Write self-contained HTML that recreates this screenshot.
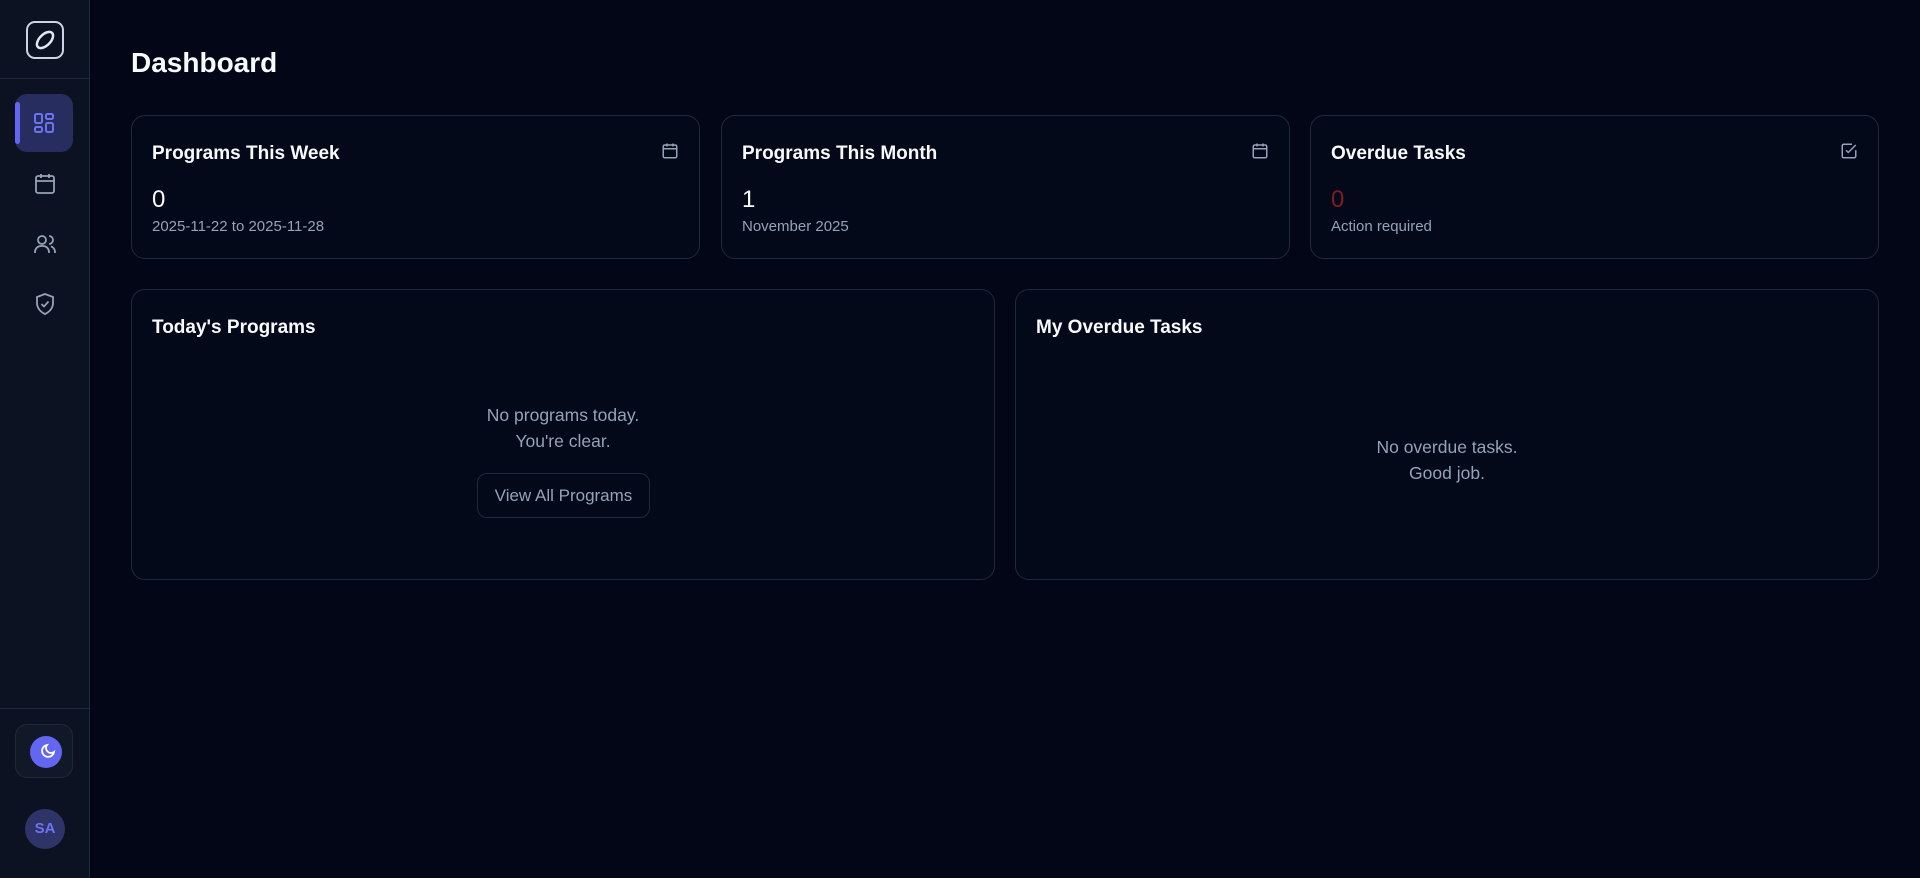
<!DOCTYPE html>
<html><head><meta charset="utf-8"><style>
*{box-sizing:border-box;margin:0;padding:0}
body{width:1920px;height:878px;background:#020617;font-family:"Liberation Sans",sans-serif;color:#f1f5f9;position:relative;overflow:hidden}
.sb{position:absolute;left:0;top:0;width:90px;height:878px;background:#0c1222;border-right:1px solid #1e293b}
.hl{position:absolute;left:0;width:89px;height:1px;background:#1e293b}
.logo{position:absolute;left:26px;top:21px;width:38px;height:38px;border:2px solid #cbd5e1;border-radius:9px}
.act{position:absolute;left:15px;top:94px;width:58px;height:58px;border-radius:12px;background:#272d5e}
.act:before{content:"";position:absolute;left:0;top:8px;width:5px;height:42px;background:#6366f1;border-radius:3px}
.ic{position:absolute;left:33px;width:24px;height:24px}
.moonb{position:absolute;left:15px;top:724px;width:58px;height:54px;border:1px solid #1e293b;border-radius:12px;background:#111827}
.moon{position:absolute;left:14px;top:11px;width:32px;height:32px;border-radius:50%;background:#6366f1}
.av{position:absolute;left:25px;top:809px;width:40px;height:40px;border-radius:50%;background:#2e3468;color:#6d73f0;font-weight:bold;font-size:15px;text-align:center;line-height:40px}
h1{position:absolute;left:131px;top:47px;font-size:28px;font-weight:bold;color:#f8fafc}
.card{position:absolute;border:1px solid #1e293b;border-radius:14px;background:#030919}
.ct{position:absolute;left:20px;top:27px;font-size:19px;font-weight:600;color:#f8fafc}
.num{position:absolute;left:20px;top:70px;font-size:24px;color:#f8fafc}
.sub{position:absolute;left:20px;top:102px;font-size:15px;color:#94a3b8}
.ci{position:absolute;right:20px;top:26px;width:18px;height:18px}
.msg{position:absolute;left:0;right:0;text-align:center;font-size:17.5px;color:#94a3b8;line-height:26px}
.btn{position:absolute;left:345px;top:183px;width:173px;height:45px;border:1px solid #1e293b;border-radius:10px;text-align:center;line-height:43px;font-size:17px;color:#94a3b8}
</style></head><body>
<div class="sb">
<div class="logo"><svg width="34" height="34" viewBox="0 0 34 34" style="position:absolute;left:0;top:0"><ellipse cx="17" cy="17" rx="10" ry="5.5" transform="rotate(-45 17 17)" fill="none" stroke="#e2e8f0" stroke-width="2.5"/></svg></div>
<div class="hl" style="top:78px"></div>
<div class="act"><svg class="ic" style="left:17px;top:17px" viewBox="0 0 24 24" fill="none" stroke="#6d73f0" stroke-width="2"><rect x="3" y="3" width="7" height="9" rx="1.5"/><rect x="14" y="3" width="7" height="5" rx="1.5"/><rect x="14" y="12" width="7" height="9" rx="1.5"/><rect x="3" y="16" width="7" height="5" rx="1.5"/></svg></div>
<svg class="ic" style="top:172px" viewBox="0 0 24 24" fill="none" stroke="#94a3b8" stroke-width="1.8"><rect x="3" y="4" width="18" height="17" rx="2"/><path d="M3 9h18M8 2v4M16 2v4"/></svg>
<svg class="ic" style="top:232px" viewBox="0 0 24 24" fill="none" stroke="#94a3b8" stroke-width="1.8"><circle cx="9" cy="8" r="4"/><path d="M2 21v-1a6 6 0 0 1 6-6h2a6 6 0 0 1 6 6v1M16 4a4 4 0 0 1 0 8M22 21v-1a6 6 0 0 0-4-5.6"/></svg>
<svg class="ic" style="top:292px" viewBox="0 0 24 24" fill="none" stroke="#94a3b8" stroke-width="1.8"><path d="M12 2l8 3v6c0 5-3.5 9-8 11-4.5-2-8-6-8-11V5z"/><path d="M8.5 12l2.5 2.5 4.5-5"/></svg>
<div class="hl" style="top:708px"></div>
<div class="moonb"><div class="moon"><svg width="32" height="32" viewBox="0 0 32 32" fill="none" stroke="#fff" stroke-width="1.8"><path d="M17 9a6 6 0 1 0 7 7 5 5 0 0 1-7-7z"/></svg></div></div>
<div class="av">SA</div>
</div>
<h1>Dashboard</h1>
<div class="card" style="left:131px;top:115px;width:569px;height:144px"><div class="ct">Programs This Week</div><svg class="ci" viewBox="0 0 24 24" fill="none" stroke="#94a3b8" stroke-width="2"><rect x="3" y="4" width="18" height="17" rx="2"/><path d="M3 9h18M8 2v4M16 2v4"/></svg><div class="num">0</div><div class="sub">2025-11-22 to 2025-11-28</div></div>
<div class="card" style="left:721px;top:115px;width:569px;height:144px"><div class="ct">Programs This Month</div><svg class="ci" viewBox="0 0 24 24" fill="none" stroke="#94a3b8" stroke-width="2"><rect x="3" y="4" width="18" height="17" rx="2"/><path d="M3 9h18M8 2v4M16 2v4"/></svg><div class="num">1</div><div class="sub">November 2025</div></div>
<div class="card" style="left:1310px;top:115px;width:569px;height:144px"><div class="ct">Overdue Tasks</div><svg class="ci" viewBox="0 0 24 24" fill="none" stroke="#94a3b8" stroke-width="2"><path d="M21 11v8a2 2 0 0 1-2 2H5a2 2 0 0 1-2-2V5a2 2 0 0 1 2-2h11"/><path d="M8 11l3 3 10-10"/></svg><div class="num" style="color:#7f1d1d">0</div><div class="sub">Action required</div></div>
<div class="card" style="left:131px;top:289px;width:864px;height:291px"><div class="ct">Today's Programs</div><div class="msg" style="top:112px">No programs today.<br>You're clear.</div><div class="btn">View All Programs</div></div>
<div class="card" style="left:1015px;top:289px;width:864px;height:291px"><div class="ct">My Overdue Tasks</div><div class="msg" style="top:144px">No overdue tasks.<br>Good job.</div></div>
</body></html>
